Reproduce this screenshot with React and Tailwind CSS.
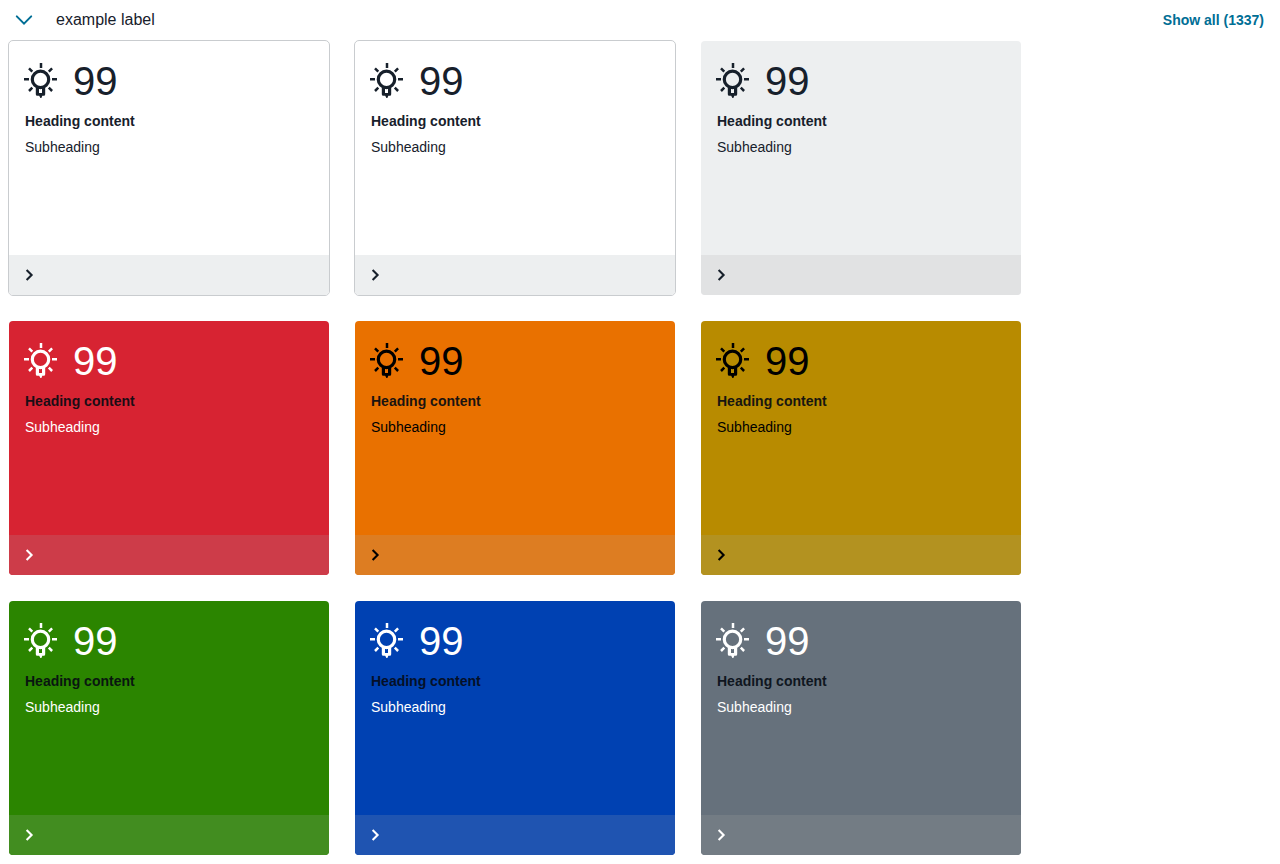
const cards = [
  { id: 'default', card: 'border-[#c9cccf] bg-white', text: 'text-[#17202b]', heading: 'text-[#17202b]', footer: 'bg-[#edeff0]' },
  { id: 'outlined', card: 'border-[#c9cccf] bg-white', text: 'text-[#17202b]', heading: 'text-[#17202b]', footer: 'bg-[#edeff0]' },
  { id: 'neutral', card: 'border-transparent bg-[#edeff0]', text: 'text-[#17202b]', heading: 'text-[#17202b]', footer: 'bg-[#e1e2e3]' },
  { id: 'red', card: 'border-transparent bg-[#d72332]', text: 'text-white', heading: 'text-[#1a0d15]', footer: 'bg-[#cd3c49]' },
  { id: 'orange', card: 'border-transparent bg-[#e97100]', text: 'text-black', heading: 'text-[#1a1410]', footer: 'bg-[#dd7d22]' },
  { id: 'yellow', card: 'border-transparent bg-[#b88b00]', text: 'text-black', heading: 'text-[#171610]', footer: 'bg-[#b39220]' },
  { id: 'green', card: 'border-transparent bg-[#2b8500]', text: 'text-white', heading: 'text-[#091610]', footer: 'bg-[#428d20]' },
  { id: 'blue', card: 'border-transparent bg-[#0041b2]', text: 'text-white', heading: 'text-[#051028]', footer: 'bg-[#1f54b1]' },
  { id: 'gray', card: 'border-transparent bg-[#66717c]', text: 'text-white', heading: 'text-[#0f1620]', footer: 'bg-[#737c84]' },
];

function Bulb() {
  return (
    <svg className="-mt-0.5 -ml-0.5 h-9 w-9 shrink-0" viewBox="0 0 36 36" fill="none" stroke="currentColor" aria-hidden="true">
      <circle cx="17.5" cy="17.4" r="8.2" strokeWidth="3.2" />
      <path d="M18 1.1v4.8M1 17.2h5M29 17.2h5M6 6.3l3.3 3.3M29.1 6.3l-3.3 3.3M6 29l3.3-3.3M29.1 29l-3.3-3.3" strokeWidth="2.5" />
      <path fill="currentColor" stroke="none" fillRule="evenodd" d="M12.8 24.5H22.2V32.3Q22.2 33.8 20.7 33.8H19.3L18.4 36H17.4L16.2 33.8H14.3Q12.8 33.8 12.8 32.3ZM16 27V31H19V27Z" />
    </svg>
  );
}

function Card({ item }) {
  return (
    <article className={`flex h-64 flex-col overflow-hidden rounded-[5px] border bg-clip-padding ${item.card} ${item.text}`}>
      <div className="flex-1 px-4 pt-4">
        <div className="flex h-12 items-center gap-3.5">
          <Bulb />
          <span className="text-[40px] leading-12">99</span>
        </div>
        <h2 className={`mt-1.5 text-sm font-bold ${item.heading}`}>Heading content</h2>
        <p className="mt-1.5 text-sm">Subheading</p>
      </div>
      <div className={`flex h-10 items-center px-4 ${item.footer}`}>
        <svg className="h-4 w-4" viewBox="0 0 16 16" fill="none" stroke="currentColor" strokeWidth="2.1" aria-hidden="true">
          <path d="M1.6 3l5 5-5 5" />
        </svg>
      </div>
    </article>
  );
}

export default function App() {
  return (
    <main className="h-[864px] overflow-hidden bg-white font-['Liberation_Sans',Arial,sans-serif]">
      <header className="flex h-10 items-center px-4">
        <svg className="h-4 w-4 overflow-visible" viewBox="0 0 16 16" fill="none" stroke="#006e95" strokeWidth="2" aria-hidden="true">
          <path d="M0.8 4.4L8 11.6l7.2-7.2" strokeLinecap="round" />
        </svg>
        <span className="ml-6 text-base text-[#17202b]">example label</span>
        <button className="ml-auto text-sm font-bold text-[#006e95]">Show all (1337)</button>
      </header>
      <div className="grid grid-cols-[repeat(3,322px)] gap-6 px-2">
        {cards.map((item) => <Card key={item.id} item={item} />)}
      </div>
    </main>
  );
}
